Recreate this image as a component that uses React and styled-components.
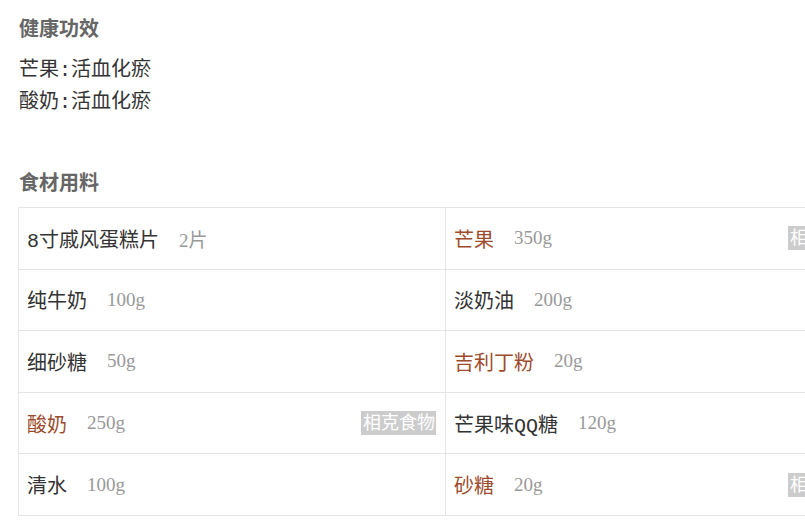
import React from "react";
import styled, { createGlobalStyle } from "styled-components";

const Global = createGlobalStyle`
  html, body { margin: 0; padding: 0; background: #fff; overflow: hidden; }
  body { font-family: "Liberation Serif", "Noto Sans CJK SC", serif; }
`;

const Page = styled.div`
  padding: 13px 0 0 19px;
  width: 900px;
`;

const Heading = styled.h3`
  margin: 0;
  font-size: 20px;
  line-height: 32px;
  font-weight: bold;
  color: #666;
  margin-top: ${(p) => p.$top || 0}px;
`;

const EffectList = styled.div`
  margin-top: 10px;
  margin-bottom: -2px;
`;

const EffectLine = styled.div`
  font-family: "Liberation Mono", "Noto Sans CJK SC", monospace;
  font-size: 20px;
  line-height: 32px;
  color: #333;
`;

const Table = styled.div`
  margin: 8px 0 0 -1px;
  width: 854px;
  display: grid;
  grid-template-columns: 427px 427px;
  border-top: 1px solid #e5e5e5;
  border-left: 1px solid #e5e5e5;
`;

const Cell = styled.div`
  box-sizing: border-box;
  height: 61.6px;
  border-right: 1px solid #e5e5e5;
  border-bottom: 1px solid #e5e5e5;
  display: flex;
  align-items: center;
  padding: 0 9px 0 8px;
`;

const Name = styled.span`
  font-family: "Liberation Mono", "Noto Sans CJK SC", monospace;
  font-size: 20px;
  color: ${(p) => (p.$hl ? "#9e4b2c" : "#333")};
`;

const Amount = styled.span`
  margin-left: 20px;
  font-size: 19px;
  color: #999;
`;

const Tag = styled.span`
  margin-left: auto;
  background: #ccc;
  color: #fff;
  font-size: 18px;
  line-height: 24px;
  padding: 0 1px 0 2px;
`;

const rows = [
  [
    { name: "8寸戚风蛋糕片", amt: "2片" },
    { name: "芒果", amt: "350g", hl: true, tag: true },
  ],
  [
    { name: "纯牛奶", amt: "100g" },
    { name: "淡奶油", amt: "200g" },
  ],
  [
    { name: "细砂糖", amt: "50g" },
    { name: "吉利丁粉", amt: "20g", hl: true },
  ],
  [
    { name: "酸奶", amt: "250g", hl: true, tag: true },
    { name: "芒果味QQ糖", amt: "120g" },
  ],
  [
    { name: "清水", amt: "100g" },
    { name: "砂糖", amt: "20g", hl: true, tag: true },
  ],
];

export default function App() {
  return (
    <Page>
      <Global />
      <Heading>健康功效</Heading>
      <EffectList>
        <EffectLine>芒果:活血化瘀</EffectLine>
        <EffectLine>酸奶:活血化瘀</EffectLine>
      </EffectList>
      <Heading $top={50}>食材用料</Heading>
      <Table>
        {rows.flat().map((c, i) => (
          <Cell key={i}>
            <Name $hl={c.hl}>{c.name}</Name>
            <Amount>{c.amt}</Amount>
            {c.tag && <Tag>相克食物</Tag>}
          </Cell>
        ))}
      </Table>
    </Page>
  );
}
